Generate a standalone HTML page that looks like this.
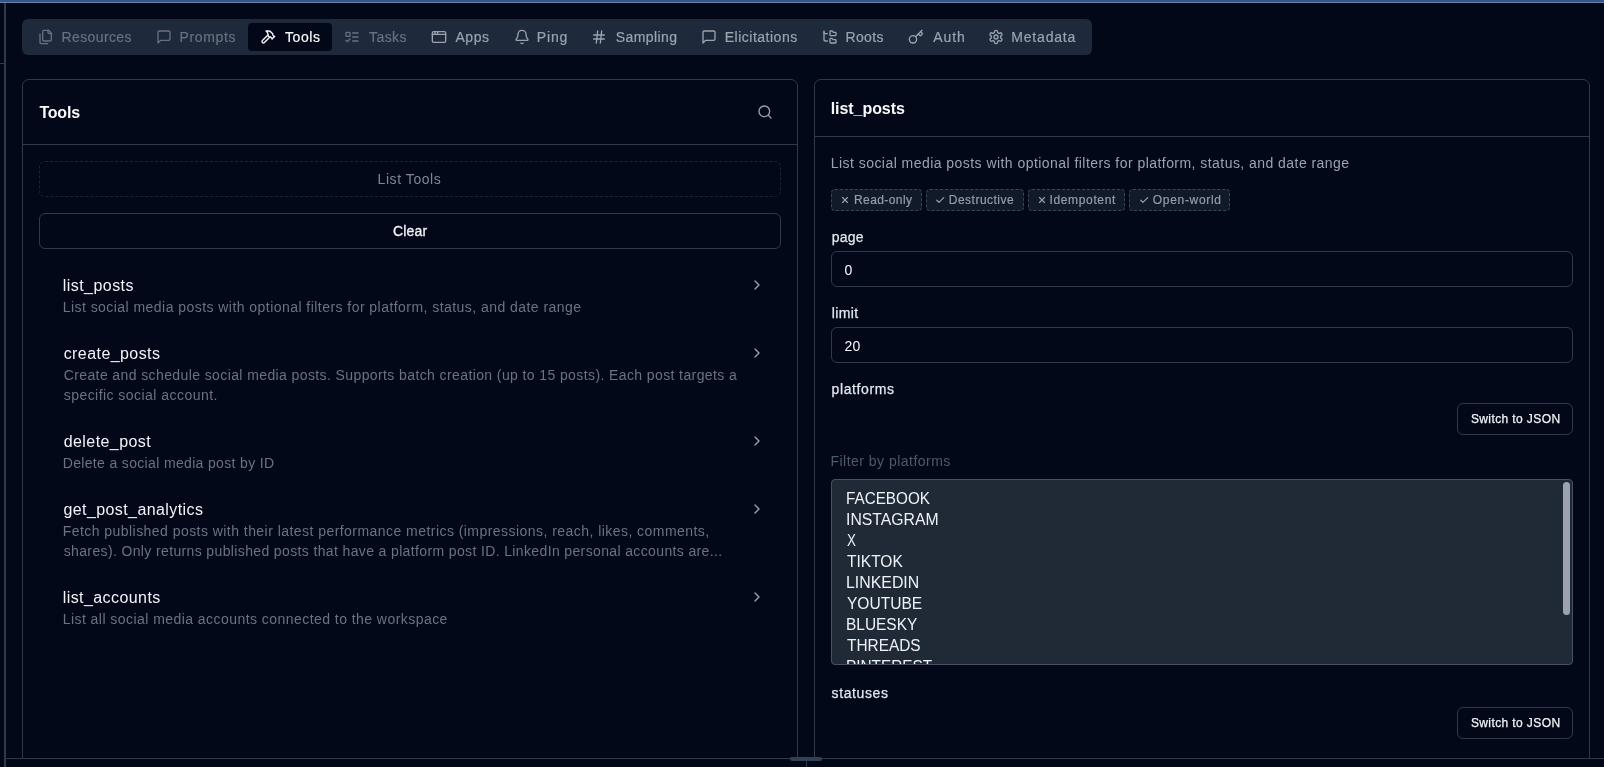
<!DOCTYPE html>
<html><head><meta charset="utf-8"><style>
html,body{margin:0;padding:0}
body{width:1604px;height:767px;overflow:hidden;background:#020817;position:relative;font-family:"Liberation Sans",sans-serif}
.a{position:absolute;box-sizing:border-box}
.t{position:absolute;white-space:pre;line-height:1}
#txt{position:absolute;left:0;top:0;width:1604px;height:767px;will-change:transform}
.ic{position:absolute}
</style></head><body>
<div class="a" style="left:0;top:0;width:1604px;height:2px;background:#355686"></div>
<div class="a" style="left:0;top:2px;width:1604px;height:1px;background:#6682ab"></div>
<div class="a" style="left:4px;top:3px;width:2px;height:764px;background:#2e394a"></div>
<div class="a" style="left:0;top:63px;width:4px;height:1px;background:#2e394a"></div>

<div class="a" style="left:22px;top:19px;width:1070px;height:36px;border-radius:6px;background:#1e293b"></div>
<div class="a" style="left:248px;top:23px;width:84px;height:28px;border-radius:4px;background:#020817"></div>

<div class="a" style="left:22px;top:79px;width:776px;height:700px;border:1px solid #2e394a;border-radius:7px"></div>
<div class="a" style="left:23px;top:144px;width:774px;height:1px;background:#2e394a"></div>
<div class="a" style="left:814px;top:79px;width:776px;height:700px;border:1px solid #2e394a;border-radius:7px"></div>
<div class="a" style="left:815px;top:136px;width:774px;height:1px;background:#2e394a"></div>

<div class="a" style="left:0;top:758px;width:1604px;height:9px;background:#020817"></div>
<div class="a" style="left:4px;top:758px;width:2px;height:9px;background:#2e394a"></div>
<div class="a" style="left:6px;top:758px;width:1598px;height:1px;background:#2e394a"></div>
<div class="a" style="left:790px;top:757px;width:32px;height:4px;border-radius:2px;background:#334155"></div>
<div class="a" style="left:806px;top:761px;width:1px;height:6px;background:#2e394a"></div>

<div class="a" style="left:39px;top:161px;width:742px;height:36px;border:1px dashed #1b2434;border-radius:6px"></div>
<div class="a" style="left:39px;top:213px;width:742px;height:36px;border:1px solid #2e394a;border-radius:6px"></div>

<div class="a" style="left:831px;top:189px;width:91px;height:22px;border:1px dashed #3a4557;border-radius:4px;background:#111a29"></div>
<div class="a" style="left:926px;top:189px;width:98px;height:22px;border:1px dashed #3a4557;border-radius:4px;background:#111a29"></div>
<div class="a" style="left:1028px;top:189px;width:97px;height:22px;border:1px dashed #3a4557;border-radius:4px;background:#111a29"></div>
<div class="a" style="left:1129px;top:189px;width:101px;height:22px;border:1px dashed #3a4557;border-radius:4px;background:#111a29"></div>

<div class="a" style="left:831px;top:251px;width:742px;height:36px;border:1px solid #2e394a;border-radius:6px"></div>
<div class="a" style="left:831px;top:327px;width:742px;height:36px;border:1px solid #2e394a;border-radius:6px"></div>
<div class="a" style="left:1457px;top:403px;width:116px;height:32px;border:1px solid #2e394a;border-radius:6px"></div>
<div class="a" style="left:1457px;top:707px;width:116px;height:32px;border:1px solid #2e394a;border-radius:6px"></div>

<div class="a" style="left:831px;top:479px;width:742px;height:186px;border:1px solid #465164;border-radius:4px;background:#202a37;overflow:hidden">
<div style="position:absolute;left:0;top:0;width:740px;height:184px;will-change:transform"><span class="t" style="left:13.75px;top:11px;font-size:16px;color:#eef2f6;letter-spacing:0.000px;transform:scaleX(0.9536);transform-origin:0 0;">FACEBOOK</span>
<span class="t" style="left:13.71px;top:32px;font-size:16px;color:#eef2f6;letter-spacing:0.000px;transform:scaleX(0.9859);transform-origin:0 0;">INSTAGRAM</span>
<span class="t" style="left:14.70px;top:53px;font-size:16px;color:#eef2f6;letter-spacing:0.000px;transform:scaleX(0.8364);transform-origin:0 0;">X</span>
<span class="t" style="left:14.70px;top:74px;font-size:16px;color:#eef2f6;letter-spacing:0.000px;transform:scaleX(0.9702);transform-origin:0 0;">TIKTOK</span>
<span class="t" style="left:13.71px;top:95px;font-size:16px;color:#eef2f6;letter-spacing:0.000px;transform:scaleX(0.9925);transform-origin:0 0;">LINKEDIN</span>
<span class="t" style="left:14.70px;top:116px;font-size:16px;color:#eef2f6;letter-spacing:0.000px;transform:scaleX(0.9717);transform-origin:0 0;">YOUTUBE</span>
<span class="t" style="left:13.73px;top:137px;font-size:16px;color:#eef2f6;letter-spacing:0.000px;transform:scaleX(0.9653);transform-origin:0 0;">BLUESKY</span>
<span class="t" style="left:14.70px;top:158px;font-size:16px;color:#eef2f6;letter-spacing:0.000px;transform:scaleX(0.9633);transform-origin:0 0;">THREADS</span>
<span class="t" style="left:13.74px;top:179px;font-size:16px;color:#eef2f6;letter-spacing:0.000px;transform:scaleX(0.9605);transform-origin:0 0;">PINTEREST</span></div>
<div class="a" style="left:731px;top:2px;width:7px;height:133px;border-radius:3.5px;background:#9ca3af"></div>
</div>

<svg class="ic" style="left:38px;top:29px;color:#687181" width="16" height="16" viewBox="0 0 24 24" fill="none" stroke="currentColor" stroke-width="2" stroke-linecap="round" stroke-linejoin="round"><path d="M20 7h-3a2 2 0 0 1-2-2V2"/><path d="M9 18a2 2 0 0 1-2-2V4a2 2 0 0 1 2-2h7l4 4v10a2 2 0 0 1-2 2Z"/><path d="M3 7.6v12.8A1.6 1.6 0 0 0 4.6 22h9.8"/></svg>
<svg class="ic" style="left:156px;top:29px;color:#687181" width="16" height="16" viewBox="0 0 24 24" fill="none" stroke="currentColor" stroke-width="2" stroke-linecap="round" stroke-linejoin="round"><path d="M21 15a2 2 0 0 1-2 2H7l-4 4V5a2 2 0 0 1 2-2h14a2 2 0 0 1 2 2z"/></svg>
<svg class="ic" style="left:260px;top:29px;color:#f8fafc" width="16" height="16" viewBox="0 0 24 24" fill="none" stroke="currentColor" stroke-width="2" stroke-linecap="round" stroke-linejoin="round"><path d="m15 12-8.373 8.373a1 1 0 1 1-3-3L12 9"/><path d="m18 15 4-4"/><path d="m21.5 11.5-1.914-1.914A2 2 0 0 1 19 8.172V7l-2.26-2.26a6 6 0 0 0-4.202-1.756L9 2.96l.92.82A6.18 6.18 0 0 1 12 8.4V10l2 2h1.172a2 2 0 0 1 1.414.586L18.5 14.5"/></svg>
<svg class="ic" style="left:344px;top:29px;color:#687181" width="16" height="16" viewBox="0 0 24 24" fill="none" stroke="currentColor" stroke-width="2" stroke-linecap="round" stroke-linejoin="round"><rect x="3" y="5" width="6" height="6" rx="1"/><path d="m3 17 2 2 4-4"/><path d="M13 6h8"/><path d="M13 12h8"/><path d="M13 18h8"/></svg>
<svg class="ic" style="left:431px;top:29px;color:#9ca3af" width="16" height="16" viewBox="0 0 24 24" fill="none" stroke="currentColor" stroke-width="2" stroke-linecap="round" stroke-linejoin="round"><rect x="2" y="4" width="20" height="16" rx="2"/><path d="M10 4v4"/><path d="M2 8h20"/><path d="M6 4v4"/></svg>
<svg class="ic" style="left:514px;top:29px;color:#9ca3af" width="16" height="16" viewBox="0 0 24 24" fill="none" stroke="currentColor" stroke-width="2" stroke-linecap="round" stroke-linejoin="round"><path d="M10.268 21a2 2 0 0 0 3.464 0"/><path d="M3.262 15.326A1 1 0 0 0 4 17h16a1 1 0 0 0 .74-1.673C19.41 13.956 18 12.499 18 8A6 6 0 0 0 6 8c0 4.499-1.411 5.956-2.738 7.326"/></svg>
<svg class="ic" style="left:591px;top:29px;color:#9ca3af" width="16" height="16" viewBox="0 0 24 24" fill="none" stroke="currentColor" stroke-width="2" stroke-linecap="round" stroke-linejoin="round"><line x1="4" x2="20" y1="9" y2="9"/><line x1="4" x2="20" y1="15" y2="15"/><line x1="10" x2="8" y1="3" y2="21"/><line x1="16" x2="14" y1="3" y2="21"/></svg>
<svg class="ic" style="left:701px;top:29px;color:#9ca3af" width="16" height="16" viewBox="0 0 24 24" fill="none" stroke="currentColor" stroke-width="2" stroke-linecap="round" stroke-linejoin="round"><path d="M21 15a2 2 0 0 1-2 2H7l-4 4V5a2 2 0 0 1 2-2h14a2 2 0 0 1 2 2z"/></svg>
<svg class="ic" style="left:822px;top:29px;color:#9ca3af" width="16" height="16" viewBox="0 0 24 24" fill="none" stroke="currentColor" stroke-width="2" stroke-linecap="round" stroke-linejoin="round"><path d="M20 10a1 1 0 0 0 1-1V6a1 1 0 0 0-1-1h-2.5a1 1 0 0 1-.8-.4l-.9-1.2A1 1 0 0 0 15 3h-2a1 1 0 0 0-1 1v5a1 1 0 0 0 1 1Z"/><path d="M20 21a1 1 0 0 0 1-1v-3a1 1 0 0 0-1-1h-2.9a1 1 0 0 1-.88-.55l-.42-.85a1 1 0 0 0-.92-.6H13a1 1 0 0 0-1 1v5a1 1 0 0 0 1 1Z"/><path d="M3 5a2 2 0 0 0 2 2h3"/><path d="M3 3v13a2 2 0 0 0 2 2h3"/></svg>
<svg class="ic" style="left:908px;top:29px;color:#9ca3af" width="16" height="16" viewBox="0 0 24 24" fill="none" stroke="currentColor" stroke-width="2" stroke-linecap="round" stroke-linejoin="round"><path d="m15.5 7.5 2.3 2.3a1 1 0 0 0 1.4 0l2.1-2.1a1 1 0 0 0 0-1.4L19 4"/><path d="m21 2-9.6 9.6"/><circle cx="7.5" cy="15.5" r="5.5"/></svg>
<svg class="ic" style="left:988px;top:29px;color:#9ca3af" width="16" height="16" viewBox="0 0 24 24" fill="none" stroke="currentColor" stroke-width="2" stroke-linecap="round" stroke-linejoin="round"><path d="M12.22 2h-.44a2 2 0 0 0-2 2v.18a2 2 0 0 1-1 1.73l-.43.25a2 2 0 0 1-2 0l-.15-.08a2 2 0 0 0-2.73.73l-.22.38a2 2 0 0 0 .73 2.73l.15.1a2 2 0 0 1 1 1.72v.51a2 2 0 0 1-1 1.74l-.15.09a2 2 0 0 0-.73 2.73l.22.38a2 2 0 0 0 2.73.73l.15-.08a2 2 0 0 1 2 0l.43.25a2 2 0 0 1 1 1.73V20a2 2 0 0 0 2 2h.44a2 2 0 0 0 2-2v-.18a2 2 0 0 1 1-1.73l.43-.25a2 2 0 0 1 2 0l.15.08a2 2 0 0 0 2.73-.73l.22-.39a2 2 0 0 0-.73-2.73l-.15-.08a2 2 0 0 1-1-1.74v-.5a2 2 0 0 1 1-1.74l.15-.09a2 2 0 0 0 .73-2.73l-.22-.38a2 2 0 0 0-2.73-.73l-.15.08a2 2 0 0 1-2 0l-.43-.25a2 2 0 0 1-1-1.73V4a2 2 0 0 0-2-2z"/><circle cx="12" cy="12" r="3"/></svg>
<svg class="ic" style="left:757px;top:104px;color:#9ca3af" width="16" height="16" viewBox="0 0 24 24" fill="none" stroke="currentColor" stroke-width="2" stroke-linecap="round" stroke-linejoin="round"><circle cx="11" cy="11" r="8"/><path d="m21 21-4.3-4.3"/></svg>
<svg class="ic" style="left:749px;top:277px;color:#9ca3af" width="16" height="16" viewBox="0 0 24 24" fill="none" stroke="currentColor" stroke-width="2" stroke-linecap="round" stroke-linejoin="round"><path d="m9 18 6-6-6-6"/></svg>
<svg class="ic" style="left:749px;top:345px;color:#9ca3af" width="16" height="16" viewBox="0 0 24 24" fill="none" stroke="currentColor" stroke-width="2" stroke-linecap="round" stroke-linejoin="round"><path d="m9 18 6-6-6-6"/></svg>
<svg class="ic" style="left:749px;top:433px;color:#9ca3af" width="16" height="16" viewBox="0 0 24 24" fill="none" stroke="currentColor" stroke-width="2" stroke-linecap="round" stroke-linejoin="round"><path d="m9 18 6-6-6-6"/></svg>
<svg class="ic" style="left:749px;top:501px;color:#9ca3af" width="16" height="16" viewBox="0 0 24 24" fill="none" stroke="currentColor" stroke-width="2" stroke-linecap="round" stroke-linejoin="round"><path d="m9 18 6-6-6-6"/></svg>
<svg class="ic" style="left:749px;top:589px;color:#9ca3af" width="16" height="16" viewBox="0 0 24 24" fill="none" stroke="currentColor" stroke-width="2" stroke-linecap="round" stroke-linejoin="round"><path d="m9 18 6-6-6-6"/></svg>
<svg class="ic" style="left:840px;top:195px;color:#959dab" width="10" height="10" viewBox="0 0 24 24" fill="none" stroke="currentColor" stroke-width="2.8" stroke-linecap="round" stroke-linejoin="round"><path d="M18 6 6 18"/><path d="m6 6 12 12"/></svg>
<svg class="ic" style="left:934.6px;top:195px;color:#959dab" width="10.5" height="10.5" viewBox="0 0 24 24" fill="none" stroke="currentColor" stroke-width="2.8" stroke-linecap="round" stroke-linejoin="round"><path d="M20 6 9 17l-5-5"/></svg>
<svg class="ic" style="left:1037px;top:195px;color:#959dab" width="10" height="10" viewBox="0 0 24 24" fill="none" stroke="currentColor" stroke-width="2.8" stroke-linecap="round" stroke-linejoin="round"><path d="M18 6 6 18"/><path d="m6 6 12 12"/></svg>
<svg class="ic" style="left:1138.8px;top:195px;color:#959dab" width="10.5" height="10.5" viewBox="0 0 24 24" fill="none" stroke="currentColor" stroke-width="2.8" stroke-linecap="round" stroke-linejoin="round"><path d="M20 6 9 17l-5-5"/></svg>
<div id="txt">
<span class="t" style="left:61.60px;top:30px;font-size:14px;color:#687181;letter-spacing:0.373px;-webkit-text-stroke:0.2px currentColor;">Resources</span>
<span class="t" style="left:179.60px;top:30px;font-size:14px;color:#687181;letter-spacing:0.629px;-webkit-text-stroke:0.2px currentColor;">Prompts</span>
<span class="t" style="left:285.00px;top:30px;font-size:14px;color:#f8fafc;letter-spacing:0.579px;-webkit-text-stroke:0.2px currentColor;">Tools</span>
<span class="t" style="left:369.10px;top:30px;font-size:14px;color:#687181;letter-spacing:0.403px;-webkit-text-stroke:0.2px currentColor;">Tasks</span>
<span class="t" style="left:455.50px;top:30px;font-size:14px;color:#9ca3af;letter-spacing:0.530px;-webkit-text-stroke:0.2px currentColor;">Apps</span>
<span class="t" style="left:536.80px;top:30px;font-size:14px;color:#9ca3af;letter-spacing:0.855px;-webkit-text-stroke:0.2px currentColor;">Ping</span>
<span class="t" style="left:615.70px;top:30px;font-size:14px;color:#9ca3af;letter-spacing:0.432px;-webkit-text-stroke:0.2px currentColor;">Sampling</span>
<span class="t" style="left:724.70px;top:30px;font-size:14px;color:#9ca3af;letter-spacing:0.508px;-webkit-text-stroke:0.2px currentColor;">Elicitations</span>
<span class="t" style="left:845.40px;top:30px;font-size:14px;color:#9ca3af;letter-spacing:0.407px;-webkit-text-stroke:0.2px currentColor;">Roots</span>
<span class="t" style="left:933.30px;top:30px;font-size:14px;color:#9ca3af;letter-spacing:0.862px;-webkit-text-stroke:0.2px currentColor;">Auth</span>
<span class="t" style="left:1011.20px;top:30px;font-size:14px;color:#9ca3af;letter-spacing:0.831px;-webkit-text-stroke:0.2px currentColor;">Metadata</span>
<span class="t" style="left:39.40px;top:105px;font-size:16px;font-weight:bold;color:#f8fafc;letter-spacing:-0.195px;">Tools</span>
<span class="t" style="left:377.60px;top:172px;font-size:14px;color:#7d8796;letter-spacing:0.560px;">List Tools</span>
<span class="t" style="left:393.00px;top:224px;font-size:14px;color:#f1f5f9;letter-spacing:0.177px;-webkit-text-stroke:0.3px currentColor;">Clear</span>
<span class="t" style="left:62.70px;top:278px;font-size:16px;color:#f1f5f9;letter-spacing:0.456px;">list_posts</span>
<span class="t" style="left:62.70px;top:300px;font-size:14px;color:#6b7280;letter-spacing:0.453px;">List social media posts with optional filters for platform, status, and date range</span>
<span class="t" style="left:63.70px;top:346px;font-size:16px;color:#f1f5f9;letter-spacing:0.426px;">create_posts</span>
<span class="t" style="left:63.70px;top:368px;font-size:14px;color:#6b7280;letter-spacing:0.396px;">Create and schedule social media posts. Supports batch creation (up to 15 posts). Each post targets a</span>
<span class="t" style="left:63.70px;top:388px;font-size:14px;color:#6b7280;letter-spacing:0.457px;">specific social account.</span>
<span class="t" style="left:63.70px;top:434px;font-size:16px;color:#f1f5f9;letter-spacing:0.431px;">delete_post</span>
<span class="t" style="left:62.70px;top:456px;font-size:14px;color:#6b7280;letter-spacing:0.343px;">Delete a social media post by ID</span>
<span class="t" style="left:63.40px;top:502px;font-size:16px;color:#f1f5f9;letter-spacing:0.416px;">get_post_analytics</span>
<span class="t" style="left:62.70px;top:524px;font-size:14px;color:#6b7280;letter-spacing:0.453px;">Fetch published posts with their latest performance metrics (impressions, reach, likes, comments,</span>
<span class="t" style="left:63.70px;top:544px;font-size:14px;color:#6b7280;letter-spacing:0.367px;">shares). Only returns published posts that have a platform post ID. LinkedIn personal accounts are...</span>
<span class="t" style="left:62.70px;top:590px;font-size:16px;color:#f1f5f9;letter-spacing:0.426px;">list_accounts</span>
<span class="t" style="left:62.70px;top:612px;font-size:14px;color:#6b7280;letter-spacing:0.449px;">List all social media accounts connected to the workspace</span>
<span class="t" style="left:830.70px;top:101px;font-size:16px;font-weight:bold;color:#f8fafc;letter-spacing:-0.054px;">list_posts</span>
<span class="t" style="left:830.80px;top:156px;font-size:14px;color:#9ca3af;letter-spacing:0.452px;">List social media posts with optional filters for platform, status, and date range</span>
<span class="t" style="left:854.00px;top:194px;font-size:12px;color:#959dab;letter-spacing:0.413px;-webkit-text-stroke:0.2px currentColor;">Read-only</span>
<span class="t" style="left:948.80px;top:194px;font-size:12px;color:#959dab;letter-spacing:0.486px;-webkit-text-stroke:0.2px currentColor;">Destructive</span>
<span class="t" style="left:1049.50px;top:194px;font-size:12px;color:#959dab;letter-spacing:0.644px;-webkit-text-stroke:0.2px currentColor;">Idempotent</span>
<span class="t" style="left:1152.80px;top:194px;font-size:12px;color:#959dab;letter-spacing:0.683px;-webkit-text-stroke:0.2px currentColor;">Open-world</span>
<span class="t" style="left:831.80px;top:230px;font-size:14px;color:#e2e8f0;letter-spacing:0.214px;-webkit-text-stroke:0.25px currentColor;">page</span>
<span class="t" style="left:844.60px;top:263px;font-size:14px;color:#f8fafc;letter-spacing:0.000px;">0</span>
<span class="t" style="left:831.80px;top:306px;font-size:14px;color:#e2e8f0;letter-spacing:0.377px;-webkit-text-stroke:0.25px currentColor;">limit</span>
<span class="t" style="left:844.60px;top:339px;font-size:14px;color:#f8fafc;letter-spacing:0.214px;">20</span>
<span class="t" style="left:831.50px;top:382px;font-size:14px;color:#e2e8f0;letter-spacing:0.616px;-webkit-text-stroke:0.25px currentColor;">platforms</span>
<span class="t" style="left:1470.90px;top:413px;font-size:12px;color:#f1f5f9;letter-spacing:0.396px;-webkit-text-stroke:0.25px currentColor;">Switch to JSON</span>
<span class="t" style="left:830.50px;top:454px;font-size:14px;color:#4f5a6b;letter-spacing:0.475px;">Filter by platforms</span>
<span class="t" style="left:831.60px;top:686px;font-size:14px;color:#e2e8f0;letter-spacing:0.595px;-webkit-text-stroke:0.25px currentColor;">statuses</span>
<span class="t" style="left:1470.90px;top:717px;font-size:12px;color:#f1f5f9;letter-spacing:0.396px;-webkit-text-stroke:0.25px currentColor;">Switch to JSON</span>
</div>
</body></html>
